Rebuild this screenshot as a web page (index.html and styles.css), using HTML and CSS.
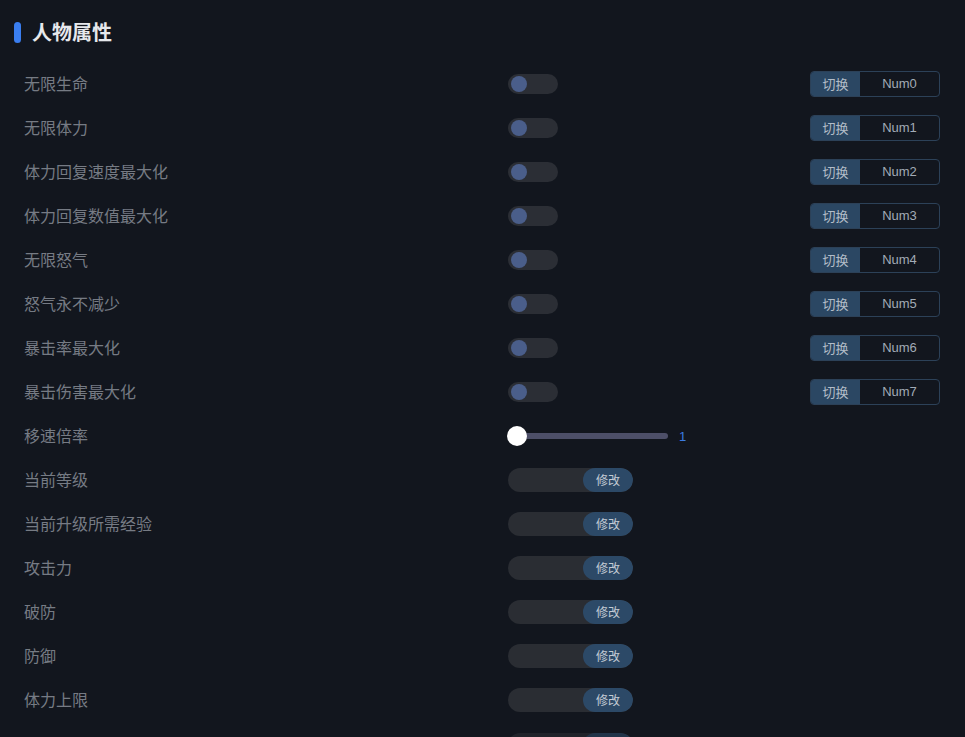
FILE: index.html
```html
<!DOCTYPE html>
<html lang="zh">
<head>
<meta charset="utf-8">
<link rel="stylesheet" href="styles.css">
</head>
<body>
<div class="panel">
  <div class="title"><span class="bar"></span><span class="title-text">人物属性</span></div>
  <div class="rows">
    <div class="row"><span class="label">无限生命</span><span class="toggle"><span class="knob"></span></span><span class="hotkey"><span class="hk-btn">切换</span><span class="hk-key">Num0</span></span></div>
    <div class="row"><span class="label">无限体力</span><span class="toggle"><span class="knob"></span></span><span class="hotkey"><span class="hk-btn">切换</span><span class="hk-key">Num1</span></span></div>
    <div class="row"><span class="label">体力回复速度最大化</span><span class="toggle"><span class="knob"></span></span><span class="hotkey"><span class="hk-btn">切换</span><span class="hk-key">Num2</span></span></div>
    <div class="row"><span class="label">体力回复数值最大化</span><span class="toggle"><span class="knob"></span></span><span class="hotkey"><span class="hk-btn">切换</span><span class="hk-key">Num3</span></span></div>
    <div class="row"><span class="label">无限怒气</span><span class="toggle"><span class="knob"></span></span><span class="hotkey"><span class="hk-btn">切换</span><span class="hk-key">Num4</span></span></div>
    <div class="row"><span class="label">怒气永不减少</span><span class="toggle"><span class="knob"></span></span><span class="hotkey"><span class="hk-btn">切换</span><span class="hk-key">Num5</span></span></div>
    <div class="row"><span class="label">暴击率最大化</span><span class="toggle"><span class="knob"></span></span><span class="hotkey"><span class="hk-btn">切换</span><span class="hk-key">Num6</span></span></div>
    <div class="row"><span class="label">暴击伤害最大化</span><span class="toggle"><span class="knob"></span></span><span class="hotkey"><span class="hk-btn">切换</span><span class="hk-key">Num7</span></span></div>
    <div class="row"><span class="label">移速倍率</span><span class="slider"><span class="track"><span class="thumb"></span></span><span class="value">1</span></span><span></span></div>
    <div class="row"><span class="label">当前等级</span><span class="input"><span class="field"></span><span class="btn">修改</span></span><span></span></div>
    <div class="row"><span class="label">当前升级所需经验</span><span class="input"><span class="field"></span><span class="btn">修改</span></span><span></span></div>
    <div class="row"><span class="label">攻击力</span><span class="input"><span class="field"></span><span class="btn">修改</span></span><span></span></div>
    <div class="row"><span class="label">破防</span><span class="input"><span class="field"></span><span class="btn">修改</span></span><span></span></div>
    <div class="row"><span class="label">防御</span><span class="input"><span class="field"></span><span class="btn">修改</span></span><span></span></div>
    <div class="row"><span class="label">体力上限</span><span class="input"><span class="field"></span><span class="btn">修改</span></span><span></span></div>
    <div class="row partial"><span class="label"></span><span class="input"><span class="field"></span><span class="btn"></span></span><span></span></div>
  </div>
</div>
</body>
</html>
```

FILE: styles.css
```css
html, body {
  margin: 0;
  padding: 0;
  background: #12161e;
  height: 737px;
  overflow: hidden;
  font-family: "Noto Sans CJK SC", "Noto Sans", sans-serif;
}

.panel {
  padding: 0 25px 0 24px;
}

.title {
  display: flex;
  align-items: center;
  height: 22px;
  padding-top: 21px;
  margin-left: -10px;
  gap: 11px;
}

.bar {
  width: 7px;
  height: 21px;
  border-radius: 4px;
  background: #3a7ef0;
}

.title-text {
  font-size: 20px;
  font-weight: 700;
  color: #e6e8ec;
  line-height: 22px;
}

.rows {
  padding-top: 19px;
}

.row {
  display: grid;
  grid-template-columns: 484px 1fr auto;
  align-items: center;
  height: 44px;
}

.label {
  font-size: 16px;
  color: #767b84;
  line-height: 20px;
  padding-bottom: 2px;
}

.toggle {
  width: 50px;
  height: 20px;
  border-radius: 10px;
  background: #2b2e35;
  display: flex;
  align-items: center;
  padding-left: 3px;
  box-sizing: border-box;
}

.knob {
  width: 16px;
  height: 16px;
  border-radius: 50%;
  background: #4a5e8a;
}

.hotkey {
  display: flex;
  width: 130px;
  height: 26px;
  box-sizing: border-box;
  border: 1px solid #2c4158;
  border-radius: 4px;
  overflow: hidden;
  font-size: 13px;
  line-height: 24px;
}

.hk-btn {
  width: 49px;
  background: #2b4763;
  color: #b3bdc8;
  text-align: center;
}

.hk-key {
  flex: 1;
  text-align: center;
  color: #a2abb6;
  font-family: "Liberation Sans", "Noto Sans", sans-serif;
}

.slider {
  display: flex;
  align-items: center;
  gap: 11px;
}

.track {
  position: relative;
  width: 160px;
  height: 6px;
  border-radius: 3px;
  background: #4d4f68;
}

.thumb {
  position: absolute;
  left: -1px;
  top: -7px;
  width: 20px;
  height: 20px;
  border-radius: 50%;
  background: #ffffff;
}

.value {
  font-size: 13px;
  color: #3c7be2;
  font-family: "Liberation Sans", sans-serif;
}

.input {
  display: flex;
  width: 125px;
  height: 24px;
  border-radius: 12px;
  background: #2a2d33;
  overflow: hidden;
}

.field {
  flex: 1;
}

.btn {
  width: 50px;
  border-radius: 12px;
  background: #2c4967;
  color: #c3cbd5;
  font-size: 12px;
  line-height: 24px;
  text-align: center;
}

.partial .input {
  margin-top: 2px;
  opacity: 0.6;
}
```
